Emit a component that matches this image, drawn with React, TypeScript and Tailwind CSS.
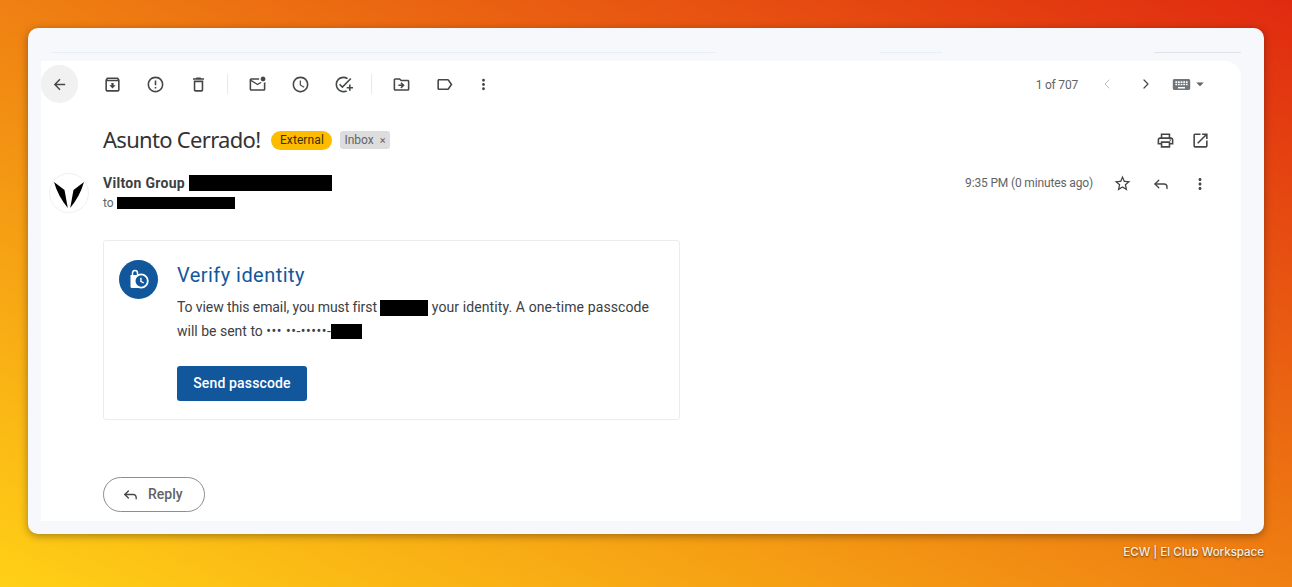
import { ChevronLeft, ChevronRight, Reply } from 'lucide-react';
import {
    MdArrowBack,
    MdArrowDropDown,
    MdErrorOutline,
    MdKeyboard,
    MdMoreVert,
    MdOpenInNew,
    MdOutlineAddTask,
    MdOutlineArchive,
    MdOutlineDelete,
    MdOutlineDriveFileMove,
    MdOutlineLabel,
    MdOutlineMarkEmailUnread,
    MdOutlinePrint,
    MdOutlineSchedule,
    MdOutlineStarBorder,
} from 'react-icons/md';

function ToolButton({ children }: { children: React.ReactNode }) {
    return <button className="w-[43px] h-[38px] flex items-center justify-center text-[#444746]">{children}</button>;
}

function Divider({ className }: { className: string }) {
    return <div className={`w-px h-5 bg-[#e6e8ea] mr-[8px] ${className}`} />;
}

function Redacted({ className }: { className: string }) {
    return <span className={`inline-block bg-black align-middle ${className}`} />;
}

function Logo() {
    return (
        <div className="w-[40px] h-[40px] rounded-full border border-[#f0f0f0] bg-white shrink-0 flex items-center justify-center">
            <svg width="32" height="30" viewBox="0 0 32 30">
                <path d="M1 4 L11.5 12 L14.8 30 Q5 18 1 4 Z" fill="#000" />
                <path d="M31 4 L20.5 12 L17.2 30 Q27 18 31 4 Z" fill="#000" />
            </svg>
        </div>
    );
}

function VerifyBadge() {
    return (
        <div className="w-[39px] h-[39px] rounded-full bg-[#12579c] shrink-0 flex items-center justify-center">
            <svg width="24" height="24" viewBox="0 0 24 24">
                <path d="M3.5 7 H12 V20 H5 Q3.5 20 3.5 18.5 Z" fill="#fff" />
                <path d="M5.5 8 V5 Q5.5 2.4 8 2.4 Q10.5 2.4 10.5 5 V8" fill="none" stroke="#fff" strokeWidth="1.5" />
                <circle cx="14.2" cy="13" r="6.6" fill="#12579c" stroke="#fff" strokeWidth="1.8" />
                <path d="M13.9 9.8 V13.4 L16.7 15" fill="none" stroke="#fff" strokeWidth="1.4" />
            </svg>
        </div>
    );
}

export default function App() {
    return (
        <div className="w-[1292px] h-[587px] overflow-hidden flex flex-col pt-[28px] px-[28px] bg-[linear-gradient(to_top_right,#ffd016,#ef8012_50%,#e02a10)] font-['Roboto',sans-serif]">
            <div className="h-[506px] shrink-0 rounded-[10px] bg-[#f6f8fc] shadow-[0_2px_8px_rgba(0,0,0,0.35)] flex flex-col pl-[13px] pr-[23px] pb-[13px]">
                <div className="h-[33px] shrink-0 flex pt-[24px]">
                    <div className="ml-[10px] w-[666px] h-px bg-[#e8eff7]" />
                    <div className="ml-[163px] w-[63px] h-px bg-[#e8eff7]" />
                    <div className="ml-[212px] w-[87px] h-px bg-[#dfe3e8]" />
                </div>

                <div className="flex-1 bg-white rounded-tr-2xl overflow-hidden flex flex-col">
                    <div className="flex items-center h-[46px] shrink-0">
                        <button className="w-[37px] h-[38px] rounded-full bg-[#f1f1f1] flex items-center justify-center text-[#444746]">
                            <MdArrowBack size={17} />
                        </button>
                        <div className="w-[13px]" />
                        <ToolButton><MdOutlineArchive size={19} /></ToolButton>
                        <ToolButton><MdErrorOutline size={19} /></ToolButton>
                        <ToolButton><MdOutlineDelete size={19} /></ToolButton>
                        <Divider className="ml-[7px]" />
                        <ToolButton><MdOutlineMarkEmailUnread size={19} /></ToolButton>
                        <ToolButton><MdOutlineSchedule size={19} /></ToolButton>
                        <ToolButton><MdOutlineAddTask size={19} /></ToolButton>
                        <Divider className="ml-[6px]" />
                        <ToolButton><MdOutlineDriveFileMove size={19} /></ToolButton>
                        <ToolButton><MdOutlineLabel size={19} /></ToolButton>
                        <button className="w-[34px] h-[38px] flex items-center justify-center text-[#444746]"><MdMoreVert size={17} /></button>

                        <div className="ml-auto flex items-center pr-[32px]">
                            <span className="text-[12px] tracking-[-0.2px] text-[#5f6368] mr-[21px] pt-[1px]">1 of 707</span>
                            <ChevronLeft size={16} strokeWidth={1.5} className="text-[#b9bcc0]" />
                            <div className="w-[23px]" />
                            <ChevronRight size={16} strokeWidth={1.8} className="text-[#444746]" />
                            <div className="w-[18px]" />
                            <MdKeyboard size={19} className="text-[#70757a] scale-x-110" />
                            <MdArrowDropDown size={18} className="text-[#5f6368]" />
                        </div>
                    </div>

                    <div className="flex items-center h-[40px] mt-[13px] pl-[62px] pr-[31px] shrink-0">
                        <h1 className="text-[22px] font-['Noto_Sans',sans-serif] tracking-[-0.7px] text-[#333] mr-[11px] pb-[2px]">Asunto Cerrado!</h1>
                        <span className="h-[19px] px-[8.5px] rounded-full bg-[#fdbc00] text-[12px] tracking-[0.1px] text-[#3c3000] flex items-center mr-[8px]">External</span>
                        <span className="h-[18px] pl-[4px] pr-[4px] rounded-[3px] bg-[#dddddd] text-[12px] text-[#666] flex items-center gap-[6px]">Inbox <span className="text-[11px] leading-none">×</span></span>
                        <div className="ml-auto flex items-center gap-[16px] text-[#444746]">
                            <MdOutlinePrint size={19} />
                            <MdOpenInNew size={19} />
                        </div>
                    </div>

                    <div className="flex mt-[13px] pl-[8px] pr-[32px] shrink-0">
                        <Logo />
                        <div className="ml-[14px] flex-1 flex flex-col">
                            <div className="flex items-center h-[20px]">
                                <span className="text-[14px] tracking-[0.3px] font-bold text-[#3c4043] mr-[4px]">Vilton Group</span>
                                <Redacted className="w-[143px] h-[16px]" />
                            </div>
                            <div className="flex items-center h-[20px] text-[12px] text-[#5f6368]">
                                to
                                <Redacted className="ml-[3px] w-[118px] h-[12px]" />
                            </div>
                        </div>
                        <div className="flex items-start h-[20px]">
                            <span className="text-[12px] tracking-[-0.15px] text-[#5f6368] leading-[20px] mr-[20px]">9:35 PM (0 minutes ago)</span>
                            <div className="flex items-center text-[#444746] pt-[1px]">
                                <MdOutlineStarBorder size={19} className="mr-[20px]" />
                                <Reply size={18} strokeWidth={1.8} className="mr-[21px]" />
                                <MdMoreVert size={18} />
                            </div>
                        </div>
                    </div>

                    <div className="ml-[62px] mt-[27px] w-[577px] h-[180px] border border-[#ececec] rounded-[3px] flex pl-[15px] pt-[19px] shrink-0">
                        <VerifyBadge />
                        <div className="ml-[19px] flex flex-col">
                            <h2 className="text-[20px] leading-[30px] text-[#12589c] tracking-[0.45px]">Verify identity</h2>
                            <p className="mt-[6px] text-[14px] leading-[23.5px] text-[#3c4043] w-[480px]">
                                <span className="tracking-[-0.1px]">To view this email, you must first </span><Redacted className="w-[48px] h-[16px]" /><span className="tracking-[0.1px]"> your identity. A one-time passcode</span> will be sent to <span className="tracking-[0.5px]">••• ••-•••••-</span><Redacted className="w-[31px] h-[15px]" />
                            </p>
                            <button className="mt-[23px] w-[130px] h-[35px] rounded-[3px] bg-[#12579c] text-white text-[14px] font-medium tracking-[0.15px]">Send passcode</button>
                        </div>
                    </div>

                    <button className="ml-[62px] mt-[57px] w-[102px] h-[35px] rounded-full border border-[#8e8e8e] flex items-center pl-[18px] gap-[9px] text-[14px] font-medium text-[#5f6368] shrink-0">
                        <Reply size={17} strokeWidth={1.9} className="text-[#444746]" />
                        Reply
                    </button>
                </div>
            </div>

            <div className="flex justify-end pt-[10px] text-[11.5px] font-medium text-[#f5efe6] font-['Inter',sans-serif] [text-shadow:0_1px_2px_rgba(0,0,0,0.6)]">
                ECW | El Club Workspace
            </div>
        </div>
    );
}
